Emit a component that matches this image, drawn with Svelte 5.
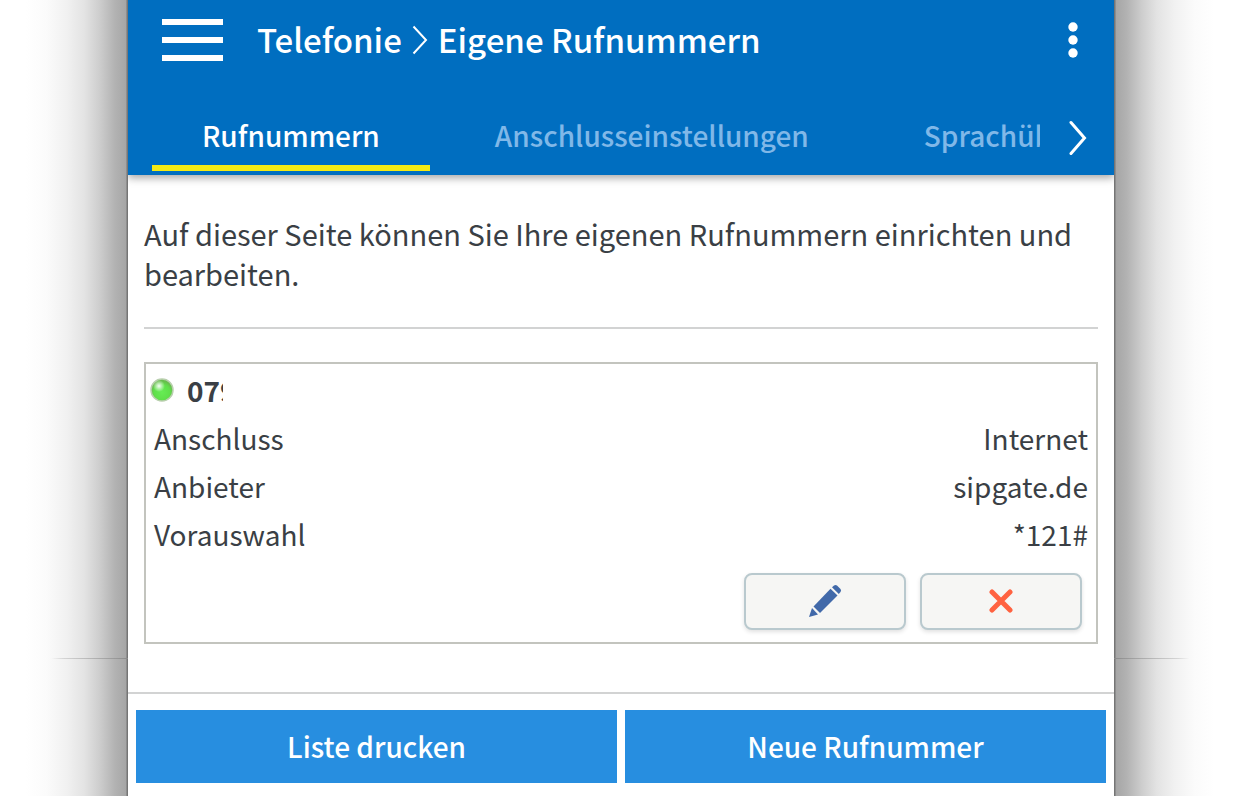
<script>
  const tabs = ['Rufnummern', 'Anschlusseinstellungen', 'Sprachübertragung'];
  let active = $state(0);
  const rows = [
    ['Anschluss', 'Internet'],
    ['Anbieter', 'sipgate.de'],
    ['Vorauswahl', '*121#']
  ];
</script>

<div class="stage">
  <div class="shade left"></div>
  <div class="panel">
    <header>
      <div class="bar">
        <button class="plain menu" aria-label="Menü">
          <svg width="61" height="44" viewBox="0 0 61 44" fill="#fff">
            <rect y="1" width="61" height="6" /><rect y="19" width="61" height="6" /><rect y="37" width="61" height="6" />
          </svg>
        </button>
        <h1>
          <span>Telefonie</span>
          <svg width="16" height="30" viewBox="0 0 16 30" fill="none" stroke="#fff" stroke-width="2"><path d="M1.5 1.5 14 15 1.5 28.5" /></svg>
          <span>Eigene Rufnummern</span>
        </h1>
        <button class="plain more" aria-label="Mehr">
          <svg width="10" height="36" viewBox="0 0 10 36" fill="#fff">
            <circle cx="5" cy="5" r="4.7" /><circle cx="5" cy="18" r="4.7" /><circle cx="5" cy="31" r="4.7" />
          </svg>
        </button>
      </div>
      <nav>
        <div class="tabs">
          {#each tabs as tab, i}
            <button class="plain tab" class:active={i === active} onclick={() => (active = i)}>{tab}</button>
          {/each}
        </div>
        <button class="plain next" aria-label="Weitere Reiter">
          <svg width="18" height="36" viewBox="0 0 18 36" fill="none" stroke="#fff" stroke-width="3" stroke-linecap="round"><path d="M2 2.5 15.5 18 2 33.5" /></svg>
        </button>
      </nav>
    </header>

    <main>
      <p>Auf dieser Seite können Sie Ihre eigenen Rufnummern einrichten und bearbeiten.</p>
      <hr />
      <section class="card">
        <div class="number">
          <svg width="24" height="24" viewBox="0 0 24 24">
            <defs>
              <radialGradient id="led" cx="0.5" cy="0.6" r="0.5">
                <stop offset="0" stop-color="#66ec54" /><stop offset="0.7" stop-color="#5fe04a" /><stop offset="1" stop-color="#68bd4e" />
              </radialGradient>
              <radialGradient id="glint">
                <stop offset="0" stop-color="#fff" stop-opacity="0.95" /><stop offset="1" stop-color="#fff" stop-opacity="0" />
              </radialGradient>
            </defs>
            <circle cx="12" cy="12" r="11" fill="url(#led)" stroke="#b9cfae" stroke-width="1.5" />
            <circle cx="9" cy="8" r="6" fill="url(#glint)" />
          </svg>
          <strong>079</strong>
        </div>
        <dl>
          {#each rows as [name, value]}
            <div><dt>{name}</dt><dd>{value}</dd></div>
          {/each}
        </dl>
        <div class="actions">
          <button class="tool" aria-label="Bearbeiten">
            <svg width="34" height="34" viewBox="0 0 34 34" fill="#4169a9">
              <path d="M1 33 4 24 10 30.5Z" />
              <path d="M5.500 22.500 22.500 4.800 29.500 11.500 12 29Z" />
              <path d="M24 3.300 26 1.500Q27.500 0.500 29 1.500L32.500 5Q33.700 6.500 32.500 8L30.800 10Z" />
            </svg>
          </button>
          <button class="tool" aria-label="Löschen">
            <svg width="24" height="24" viewBox="0 0 24 24" stroke="#ff6240" stroke-width="5" stroke-linecap="round"><path d="M3 3 21 21M21 3 3 21" /></svg>
          </button>
        </div>
      </section>
    </main>

    <footer>
      <button class="primary">Liste drucken</button>
      <button class="primary">Neue Rufnummer</button>
    </footer>
  </div>
  <div class="shade right"></div>
</div>

<style>
  :global(body) { margin: 0; background: #fff; }
  .stage {
    display: grid;
    grid-template-columns: 128px minmax(0, 1fr) 126px;
    min-height: 100vh;
    font-family: "Noto Sans CJK SC", "Noto Sans", sans-serif;
    font-size: 28px;
    line-height: 40px;
    color: #3a3f45;
  }
  .shade {
    --dir: to left;
    background:
      linear-gradient(var(--dir), #8a8a8a, #d4d4d4 50%, transparent 60%) 0 calc(100% - 137px) / 100% 1px no-repeat,
      linear-gradient(var(--dir), #757575 1px, #a6a6a6 2px, #b2b2b2 10%, #cdcdcd 22%, #e3e3e3 34%, #f1f1f1 48%, #fbfbfb 64%, #fff 80%);
  }
  .right { --dir: to right; }
  .panel { display: flex; flex-direction: column; background: #fff; border-radius: 0 0 4px 4px; }
  button { font: inherit; cursor: pointer; }
  svg { display: block; }
  .plain { border: 0; background: none; padding: 0; color: #fff; }
  header { background: #006ec0; color: #fff; box-shadow: 0 3px 8px rgba(0, 0, 0, 0.35); clip-path: inset(0 0 -16px 0); }
  .bar { display: flex; align-items: center; height: 80px; padding: 0 36px 0 34px; }
  h1 { display: flex; align-items: center; gap: 10px; margin: 0 auto 0 34px; font-size: 33px; line-height: 38px; font-weight: 500; }
  h1 span { padding-bottom: 3px; }
  nav { display: flex; align-items: center; padding: 34px 27px 4px 24px; }
  .tabs { display: flex; gap: 15px; flex: 1; min-width: 0; margin-right: 29px; overflow: hidden; }
  .tab { flex: none; padding: 1px 50px 10px; border-bottom: 6px solid transparent; color: #80b8e8; font-size: 28px; font-weight: 500; }
  .next { padding-bottom: 10px; }
  .active { color: #fff; border-color: #f5ea14; }
  main { flex: 1; padding: 38px 16px 48px; }
  p { margin: 0 0 34px; font-size: 29px; }
  hr { margin: 0 0 33px; border: 0; border-top: 2px solid #d2d3d3; }
  .card { border: 2px solid #c3c4be; padding: 2px 8px 12px; }
  .number { display: flex; align-items: center; gap: 13px; height: 48px; margin-left: -4px; }
  strong { width: 36px; overflow: hidden; }
  dl { margin: 0; }
  dl div { display: flex; justify-content: space-between; line-height: 48px; }
  dd { margin: 0; }
  .actions { display: flex; justify-content: flex-end; gap: 14px; padding: 15px 6px 0 0; }
  .tool {
    display: grid; place-items: center; width: 162px; height: 57px; padding: 0 0 2px;
    border: 2px solid #b9c9ce; border-radius: 8px; background: #f6f6f4; box-shadow: 0 2px 4px rgba(0, 0, 0, 0.12);
  }
  footer { display: grid; grid-template-columns: 1fr 1fr; gap: 8px; padding: 16px 8px 13px; border-top: 2px solid #d2d3d3; }
  .primary { height: 73px; padding: 0 0 1px; border: 0; background: #278ee0; color: #fff; font-size: 28px; font-weight: 500; }
</style>
